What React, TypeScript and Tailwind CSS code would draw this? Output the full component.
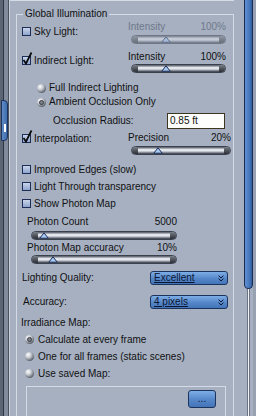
import React from 'react';

const Checkbox: React.FC<{ checked?: boolean }> = ({ checked }) => (
  <div className="relative w-[9px] h-[9px] shrink-0 border border-[#1e2c58] bg-[linear-gradient(to_bottom,#c9d5ea,#8fa5cd)]">
    {checked && (
      <svg className="absolute left-[-1px] top-[-5px] overflow-visible" width="11" height="13" viewBox="0 0 11 13">
        <path d="M1.5 8 L4 11.5 L9.5 0.5" fill="none" stroke="#0a0a0a" strokeWidth="1.7" />
      </svg>
    )}
  </div>
);

const Radio: React.FC<{ selected?: boolean }> = ({ selected }) => (
  <div className="relative w-[9px] h-[9px] shrink-0 rounded-full bg-[radial-gradient(circle_at_35%_30%,#ffffff,#c4c8cf_35%,#5a5f68_75%,#2b2e34)]">
    {selected && (
      <div className="absolute left-[2px] top-[2px] w-[5px] h-[5px] rounded-full border border-[#3a3d44] bg-[#7b8089]" />
    )}
  </div>
);

const Slider: React.FC<{ width: number; pos: number; disabled?: boolean }> = ({ width, pos, disabled }) => (
  <div
    className={`relative h-[9px] flex rounded-full border border-[#3a404c] overflow-visible ${disabled ? 'opacity-50' : ''}`}
    style={{ width }}
  >
    <div className="w-[6px] h-full rounded-l-full bg-[linear-gradient(to_bottom,#7a7f88,#4a4e56_60%,#2c2f35)]" />
    <div className="flex-1 h-full bg-[linear-gradient(to_bottom,#4c5360,#f4f6f9_40%,#d2d7df_60%,#2f3541)]" />
    <div className="w-[6px] h-full rounded-r-full bg-[linear-gradient(to_bottom,#7a7f88,#4a4e56_60%,#2c2f35)]" />
    <svg className="absolute top-[0px]" style={{ left: pos - 5 }} width="10" height="7" viewBox="0 0 10 7">
      <path d="M5 0.8 L9.2 6.2 L0.8 6.2 Z" fill="#a9c9f0" stroke="#1d2f5c" strokeWidth="1" />
    </svg>
  </div>
);

const Dropdown: React.FC<{ label: string }> = ({ label }) => (
  <div className="w-[78px] h-[14px] flex items-center justify-between pl-[3px] pr-[3px] rounded-[3px] border border-[#1c335d] bg-[linear-gradient(to_bottom,#7eaee6,#5486c8_55%,#4474b8)]">
    <span className="text-[#0b1633] underline underline-offset-[1px] leading-[12px]">{label}</span>
    <svg width="6" height="7" viewBox="0 0 6 7">
      <path d="M0.6 0.6 L3 3 L5.4 0.6 M0.6 3.6 L3 6 L5.4 3.6" fill="none" stroke="#0b1633" strokeWidth="1" />
    </svg>
  </div>
);

const CheckRow: React.FC<{ label: string; checked?: boolean }> = ({ label, checked }) => (
  <div className="h-[17px] flex items-center gap-[3px] ml-[5px]">
    <Checkbox checked={checked} />
    <span>{label}</span>
  </div>
);

const RadioRow: React.FC<{ label: string; selected?: boolean; indent: number; h: number; gap: number }> = ({
  label,
  selected,
  indent,
  h,
  gap,
}) => (
  <div className="flex items-center" style={{ height: h, marginLeft: indent, gap }}>
    <Radio selected={selected} />
    <span>{label}</span>
  </div>
);

export default function App() {
  return (
    <div className="w-[256px] h-[416px] overflow-hidden flex bg-[#a6b0c1] text-[10px] leading-[12px] text-[#111] font-['Liberation_Sans',Arial,sans-serif]">
      {/* left edge */}
      <div className="relative w-[9px] h-full flex shrink-0">
        <div className="w-[3px] bg-[#5c6574]" />
        <div className="w-[1px] bg-[#2f3541]" />
        <div className="w-[4px] bg-[#828b9b]" />
        <div className="w-[1px] bg-[#4b5361]" />
        <div className="absolute left-[1px] top-[100px] w-[7px] h-[41px] rounded-r-[4px] border border-[#1e3460] bg-[linear-gradient(to_right,#5f8bc6,#3f6cac)]">
          <div className="absolute left-[2px] top-[23px] w-[2px] h-[8px] bg-white" />
        </div>
      </div>

      {/* main column */}
      <div className="w-[235px] h-full shrink-0 border-l border-[#c9d1dd] flex flex-col">
        <div className="h-[3px] w-[224px] border-b border-r border-[#d4dbe6]" />
        <fieldset className="mt-[7px] ml-[6px] w-[218px] border border-[#d4dbe6] pb-[40px]">
          <legend className="ml-[6px] px-[2px] leading-[12px]">Global Illumination</legend>

          {/* Sky Light */}
          <div className="mt-[1px] flex">
            <div className="w-[111px] pl-[5px] pt-[6px]">
              <div className="h-[9px] flex items-center gap-[3px]">
                <Checkbox />
                <span>Sky Light:</span>
              </div>
            </div>
            <div className="w-[98px]">
              <div className="h-[12px] flex justify-between text-[#6f7889]">
                <span>Intensity</span>
                <span>100%</span>
              </div>
              <div className="mt-[2px] ml-[3px]">
                <Slider width={95} pos={34} disabled />
              </div>
            </div>
          </div>

          {/* Indirect Light */}
          <div className="mt-[7px] flex">
            <div className="w-[111px] pl-[5px] pt-[5px]">
              <div className="h-[9px] flex items-center gap-[3px]">
                <Checkbox checked />
                <span>Indirect Light:</span>
              </div>
            </div>
            <div className="w-[98px]">
              <div className="h-[12px] flex justify-between">
                <span>Intensity</span>
                <span>100%</span>
              </div>
              <div className="mt-[1px] ml-[3px]">
                <Slider width={95} pos={34} />
              </div>
            </div>
          </div>

          <div className="mt-[8px]">
            <RadioRow label="Full Indirect Lighting" indent={20} h={14} gap={3} />
            <RadioRow label="Ambient Occlusion Only" selected indent={20} h={14} gap={3} />
          </div>

          {/* Occlusion radius */}
          <div className="mt-[4px] h-[16px] flex items-center">
            <span className="ml-[36px] w-[114px]">Occlusion Radius:</span>
            <div className="w-[58px] h-[16px] flex items-center pl-[2px] bg-[#fdfdfb] border border-[#3d3522]">
              0.85 ft
            </div>
          </div>

          {/* Interpolation */}
          <div className="mt-[3px] flex">
            <div className="w-[111px] pl-[5px] pt-[2px]">
              <div className="h-[9px] flex items-center gap-[3px]">
                <Checkbox checked />
                <span>Interpolation:</span>
              </div>
            </div>
            <div className="w-[103px]">
              <div className="h-[12px] flex justify-between">
                <span>Precision</span>
                <span>20%</span>
              </div>
              <div className="mt-[2px] ml-[3px]">
                <Slider width={100} pos={26} />
              </div>
            </div>
          </div>

          <div className="mt-[6px]">
            <CheckRow label="Improved Edges (slow)" />
            <CheckRow label="Light Through transparency" />
            <CheckRow label="Show Photon Map" />
          </div>

          {/* Photon sliders */}
          <div className="mt-[4px] ml-[10px] w-[150px]">
            <div className="h-[12px] flex justify-between">
              <span>Photon Count</span>
              <span>5000</span>
            </div>
            <div className="mt-[3px] ml-[4px]">
              <Slider width={146} pos={12} />
            </div>
            <div className="mt-[2px] h-[12px] flex justify-between">
              <span>Photon Map accuracy</span>
              <span>10%</span>
            </div>
            <div className="mt-[1px] ml-[4px]">
              <Slider width={146} pos={21} />
            </div>
          </div>

          {/* Dropdowns */}
          <div className="mt-[7px] h-[14px] flex items-center">
            <span className="ml-[5px] w-[128px]">Lighting Quality:</span>
            <Dropdown label="Excellent" />
          </div>
          <div className="mt-[10px] h-[14px] flex items-center">
            <span className="ml-[6px] w-[127px]">Accuracy:</span>
            <Dropdown label="4 pixels" />
          </div>

          {/* Irradiance */}
          <div className="mt-[8px] ml-[4px] h-[12px]">Irradiance Map:</div>
          <div className="mt-[2px]">
            <RadioRow label="Calculate at every frame" selected indent={8} h={17} gap={4} />
            <RadioRow label="One for all frames (static scenes)" indent={8} h={17} gap={4} />
            <RadioRow label="Use saved Map:" indent={8} h={17} gap={4} />
          </div>
          <div className="mt-[4px] ml-[9px] w-[200px] h-[40px] border-t border-l border-r border-[#d4dbe6] pt-[3px] pr-[9px] flex justify-end">
            <div className="w-[28px] h-[18px] flex items-center justify-center rounded-[3px] border border-[#1c335d] bg-[linear-gradient(to_bottom,#7eaee6,#5486c8_55%,#4474b8)] text-[#0b1633]">
              ...
            </div>
          </div>
        </fieldset>
      </div>

      {/* scrollbar */}
      <div className="w-[9px] h-full shrink-0 flex flex-col">
        <div className="h-[289px] rounded-b-[5px] border border-t-0 border-[#1b2c55] bg-[linear-gradient(to_right,#5f90d2,#4a7bc0_55%,#305d9e)]" />
        <div className="flex-1 flex justify-center">
          <div className="w-[3px] h-full border-x border-[#6b7382] bg-[#f2f4f7]" />
        </div>
      </div>
      <div className="w-[3px] h-full bg-[#98a2b2]" />
    </div>
  );
}
